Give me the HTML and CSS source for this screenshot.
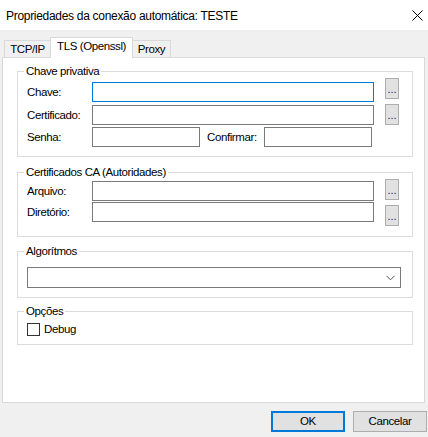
FILE: index.html
```html
<!DOCTYPE html>
<html lang="pt-BR">
<head>
<meta charset="utf-8">
<title>Propriedades</title>
<link rel="stylesheet" href="styles.css">
</head>
<body>
<div class="window">
  <div class="titlebar">
    <span class="title">Propriedades da conexão automática: TESTE</span>
    <svg class="close" width="11" height="11" viewBox="0 0 11 11"><path d="M0.5 0.5 L10.5 10.5 M10.5 0.5 L0.5 10.5" stroke="#000" stroke-width="1" fill="none"/></svg>
  </div>
  <div class="main">
    <div class="tabs">
      <div class="tab tab-first">TCP/IP</div>
      <div class="tab tab-active">TLS (Openssl)</div>
      <div class="tab tab-last">Proxy</div>
    </div>
    <div class="panel">
      <fieldset class="group g1">
        <legend>Chave privativa</legend>
        <div class="row h26">
          <span class="lbl m4">Chave:</span>
          <span class="inp wide focus m4"></span>
          <span class="dots">...</span>
        </div>
        <div class="row h23">
          <span class="lbl m1">Certificado:</span>
          <span class="inp wide m1"></span>
          <span class="dots">...</span>
        </div>
        <div class="row h20">
          <span class="lbl">Senha:</span>
          <span class="inp short"></span>
          <span class="lbl2">Confirmar:</span>
          <span class="inp short"></span>
        </div>
      </fieldset>

      <fieldset class="group g2">
        <legend>Certificados CA (Autoridades)</legend>
        <div class="row h23">
          <span class="lbl m2">Arquivo:</span>
          <span class="inp wide m2"></span>
          <span class="dots">...</span>
        </div>
        <div class="row h24">
          <span class="lbl">Diretório:</span>
          <span class="inp wide"></span>
          <span class="dots m3">...</span>
        </div>
      </fieldset>

      <fieldset class="group g3">
        <legend>Algorítmos</legend>
        <div class="select">
          <svg width="9" height="6" viewBox="0 0 9 6"><path d="M0.5 0.8 L4.5 4.8 L8.5 0.8" stroke="#555" stroke-width="1" fill="none"/></svg>
        </div>
      </fieldset>

      <fieldset class="group g4">
        <legend>Opções</legend>
        <div class="check">
          <span class="box"></span>
          <span class="check-label">Debug</span>
        </div>
      </fieldset>
    </div>
    <div class="footer">
      <span class="btn btn-default">OK</span>
      <span class="btn">Cancelar</span>
    </div>
  </div>
</div>
</body>
</html>
```
FILE: styles.css
```css
html, body {
  margin: 0;
  padding: 0;
}
body {
  width: 428px;
  height: 437px;
  overflow: hidden;
  font-family: "Liberation Sans", Arial, sans-serif;
  font-size: 11.5px;
  letter-spacing: -0.4px;
  color: #000;
  background: #f0f0f0;
}
.window {
  width: 428px;
  height: 437px;
  display: flex;
  flex-direction: column;
}
.titlebar {
  height: 30px;
  background: #fff;
  display: flex;
  align-items: center;
  justify-content: space-between;
  padding: 0 5px 0 6px;
  box-sizing: border-box;
}
.title {
  font-size: 12px;
  letter-spacing: -0.3px;
  margin-top: 1px;
}
.close {
  display: block;
  margin-right: 0;
}
.main {
  flex: 1;
  background: #f0f0f0;
}
.tabs {
  display: flex;
  align-items: flex-end;
  height: 20px;
  margin-top: 7px;
  padding-left: 4px;
}
.tab {
  box-sizing: border-box;
  height: 17px;
  border: 1px solid #d9d9d9;
  border-bottom: none;
  background: #f0f0f0;
  text-align: center;
  line-height: 16px;
}
.tab-first {
  width: 46px;
  border-right: none;
}
.tab-active {
  width: 83px;
  height: 21px;
  margin-bottom: -1px;
  background: #fff;
  position: relative;
  z-index: 1;
  line-height: 17px;
}
.tab-last {
  width: 38px;
  border-left: none;
}
.panel {
  box-sizing: border-box;
  height: 346px;
  margin: 0 3px 0 2px;
  border: 1px solid #d9d9d9;
  background: #fff;
  padding: 6px 0 0 14px;
}
.group {
  box-sizing: border-box;
  width: 396px;
  margin: 0;
  padding: 0 0 9px 9px;
  border: 1px solid #dcdcdc;
  min-width: 0;
}
.group legend {
  padding: 0 2px;
  margin-left: -3px;
  height: 14px;
  line-height: 14px;
}
.g2 { margin-top: 8px; padding-bottom: 10px; }
.g3 { margin-top: 7px; }
.g4 { margin-top: 6px; padding-bottom: 8px; }

.row {
  display: flex;
  align-items: flex-start;
}
.h20 { height: 20px; }
.h23 { height: 23px; }
.h24 { height: 24px; }
.h26 { height: 26px; }
.m1 { margin-top: 1px; }
.m2 { margin-top: 2px; }
.m3 { margin-top: 3px; }
.m4 { margin-top: 4px; }

.lbl {
  width: 65px;
  height: 20px;
  line-height: 20px;
  flex: none;
}
.lbl2 {
  width: 57px;
  margin-left: 7px;
  height: 20px;
  line-height: 20px;
  flex: none;
}
.inp {
  box-sizing: border-box;
  height: 20px;
  border: 1px solid #7a7a7a;
  background: #fff;
  flex: none;
}
.wide { width: 282px; }
.short { width: 108px; }
.focus { border-color: #0078d7; }
.dots {
  box-sizing: border-box;
  width: 14px;
  height: 21px;
  margin-left: 11px;
  border: 1px solid #adadad;
  background: #e1e1e1;
  flex: none;
  text-align: center;
  line-height: 20px;
  font-size: 11px;
  letter-spacing: 0;
  color: #2a1a40;
}
.select {
  box-sizing: border-box;
  width: 374px;
  height: 21px;
  margin-top: 9px;
  border: 1px solid #7a7a7a;
  background: #fff;
  display: flex;
  align-items: center;
  justify-content: flex-end;
  padding-right: 5px;
}
.select svg { display: block; }
.check {
  display: flex;
  align-items: center;
  margin-top: 5px;
  height: 13px;
}
.box {
  box-sizing: border-box;
  width: 13px;
  height: 13px;
  border: 1px solid #333;
  background: #fff;
  flex: none;
}
.check-label {
  margin-left: 4px;
  line-height: 13px;
}
.footer {
  display: flex;
  justify-content: flex-end;
  gap: 8px;
  margin-top: 8px;
  padding-right: 1px;
}
.btn {
  box-sizing: border-box;
  width: 74px;
  height: 21px;
  border: 1px solid #adadad;
  background: #e1e1e1;
  text-align: center;
  line-height: 19px;
}
.btn-default {
  border: 2px solid #0078d7;
  line-height: 17px;
}
```
